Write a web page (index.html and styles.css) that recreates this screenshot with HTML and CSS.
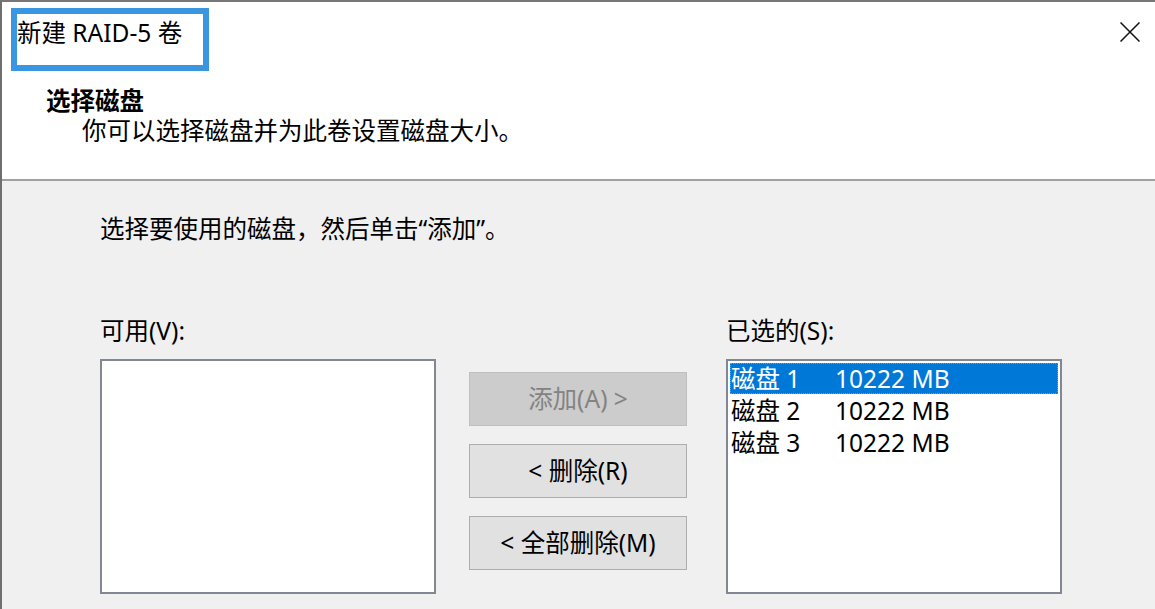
FILE: index.html
```html
<!DOCTYPE html>
<html lang="zh-CN">
<head>
<meta charset="utf-8">
<title>新建 RAID-5 卷</title>
<link rel="stylesheet" href="styles.css">
</head>
<body>
<div class="window">
  <div class="top">
    <div class="titlebar">
      <span class="title">新建 RAID-5 卷</span>
      <button class="close" aria-label="关闭">
        <svg width="20" height="20" viewBox="0 0 20 20"><path d="M0.5 0.5 L19.5 19.5 M19.5 0.5 L0.5 19.5" stroke="#111" stroke-width="1.5" fill="none"/></svg>
      </button>
      <div class="mark"></div>
    </div>
    <div class="header">
      <div class="heading">选择磁盘</div>
      <div class="subheading">你可以选择磁盘并为此卷设置磁盘大小。</div>
    </div>
  </div>
  <div class="body">
    <div class="instruction">选择要使用的磁盘，然后单击“添加”。</div>
    <div class="pickers">
      <div class="column">
        <div class="label">可用(V):</div>
        <div class="listbox"></div>
      </div>
      <div class="buttons">
        <button class="btn disabled">添加(A) &gt;</button>
        <button class="btn">&lt; 删除(R)</button>
        <button class="btn">&lt; 全部删除(M)</button>
      </div>
      <div class="column right">
        <div class="label">已选的(S):</div>
        <div class="listbox">
          <div class="item selected"><span class="name">磁盘 1</span><span class="size">10222 MB</span></div>
          <div class="item"><span class="name">磁盘 2</span><span class="size">10222 MB</span></div>
          <div class="item"><span class="name">磁盘 3</span><span class="size">10222 MB</span></div>
        </div>
      </div>
    </div>
  </div>
</div>
</body>
</html>
```

FILE: styles.css
```css
html, body {
  margin: 0;
  padding: 0;
  background: #ffffff;
  overflow: hidden;
}

body {
  width: 1155px;
  height: 609px;
  font-family: "Noto Sans", "Noto Sans CJK SC", sans-serif;
  font-size: 24.5px;
  color: #000;
}

.window {
  border-top: 2px solid #777777;
  border-left: 2px solid #6f6f6f;
  height: 609px;
  box-sizing: border-box;
  overflow: hidden;
}

.top {
  background: #ffffff;
  border-bottom: 2px solid #a0a0a0;
}

.titlebar {
  position: relative;
  height: 62px;
  display: flex;
  align-items: center;
  justify-content: space-between;
  padding-left: 15px;
  padding-right: 15px;
}

.title {
  line-height: 30px;
}

.close {
  border: 0;
  background: transparent;
  padding: 0;
  width: 20px;
  height: 20px;
  display: flex;
  margin-top: -2px;
}

.mark {
  position: absolute;
  left: 9px;
  top: 6px;
  width: 198px;
  height: 63px;
  box-sizing: border-box;
  border: 6px solid #3a96e0;
}

.header {
  padding: 21px 0 33px 44px;
}

.heading {
  font-weight: bold;
  line-height: 31px;
}

.subheading {
  line-height: 30px;
  padding-left: 36px;
}

.body {
  background: #f0f0f0;
  padding: 33px 0 0 98px;
  height: 500px;
}

.instruction {
  line-height: 30px;
}

.pickers {
  display: flex;
  margin-top: 72px;
}

.column {
  width: 336px;
  display: flex;
  flex-direction: column;
}

.column.right {
  margin-left: 39px;
}

.label {
  line-height: 30px;
  margin-bottom: 13px;
}

.listbox {
  width: 336px;
  height: 235px;
  box-sizing: border-box;
  border: 2px solid #838791;
  background: #ffffff;
  padding: 2px;
}

.buttons {
  margin-left: 33px;
  width: 218px;
  padding-top: 56px;
  display: flex;
  flex-direction: column;
  gap: 18px;
}

.btn {
  height: 54px;
  box-sizing: border-box;
  border: 1px solid #adadad;
  background: #e1e1e1;
  font-family: inherit;
  font-size: 24.5px;
  color: #000;
  padding: 0;
  line-height: 30px;
}

.btn.disabled {
  background: #cccccc;
  border-color: #bfbfbf;
  color: #838383;
}

.item {
  height: 32px;
  line-height: 32px;
  display: flex;
  padding-left: 1px;
}

.item.selected {
  background: #0078d7;
  color: #ffffff;
  height: 31px;
  line-height: 31px;
  margin-bottom: 1px;
  outline: 1px dotted #d08a3a;
  outline-offset: -1px;
}

.name {
  width: 104px;
}
```
